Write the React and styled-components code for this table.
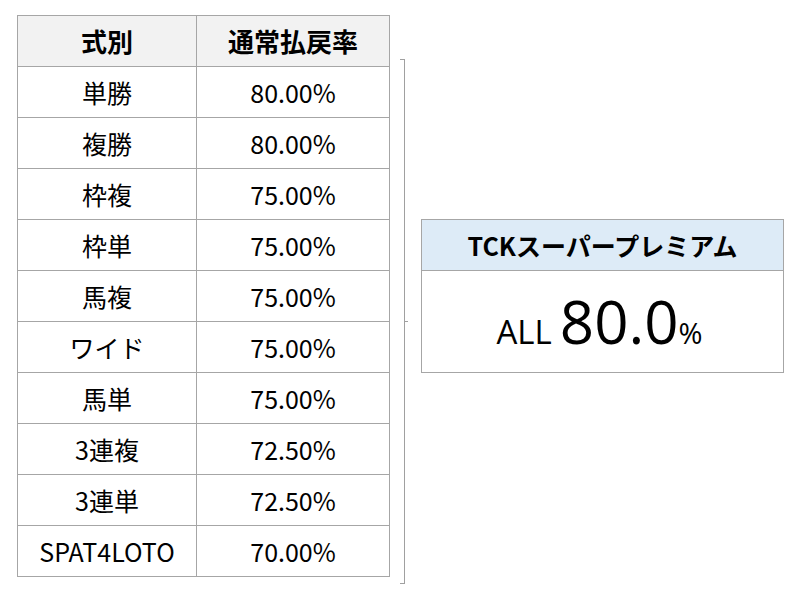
import React from "react";
import styled, { createGlobalStyle } from "styled-components";

const GlobalStyle = createGlobalStyle`
  html, body {
    margin: 0;
    padding: 0;
    background: #ffffff;
  }
`;

const Page = styled.div`
  display: flex;
  align-items: flex-start;
  padding: 15px 0 0 17px;
  color: #000;
  font-family: "Noto Sans CJK JP", "Open Sans", sans-serif;
`;

const RateTable = styled.table`
  border-collapse: collapse;
  width: 372px;
  table-layout: fixed;
`;

const HeadCell = styled.th`
  height: 50px;
  padding: 0;
  background: #f2f2f2;
  border: 1px solid #a6a6a6;
  font-size: 26px;
  font-weight: 700;
  line-height: 1;
  text-align: center;
`;

const Cell = styled.td`
  height: 50px;
  padding: 0;
  border: 1px solid #a6a6a6;
  font-size: 25px;
  font-weight: 400;
  line-height: 1;
  text-align: center;
`;

/* bracket that groups the whole table and points at the premium box */
const Bracket = styled.div`
  position: relative;
  flex: none;
  width: 4px;
  height: 523px;
  margin: 44px 0 0 10px;
  border: 1px solid #a0a0a0;
  border-left: none;

  &::after {
    content: "";
    position: absolute;
    top: 261px;
    left: 100%;
    width: 4px;
    height: 1px;
    background: #a0a0a0;
  }
`;

const PremiumBox = styled.div`
  flex: none;
  width: 361px;
  margin: 204px 0 0 16px;
  border: 1px solid #a6a6a6;
`;

const PremiumHead = styled.div`
  height: 50px;
  display: flex;
  align-items: center;
  justify-content: center;
  background: #ddebf7;
  border-bottom: 1px solid #a6a6a6;
  font-size: 25px;
  font-weight: 700;
`;

const PremiumBody = styled.div`
  height: 101px;
  display: flex;
  align-items: baseline;
  justify-content: center;
  padding-right: 6px;
  font-family: "Open Sans", sans-serif;
  line-height: 101px;
`;

const Part = styled.span`
  font-size: ${({ size }) => size}px;
  margin-right: ${({ gap }) => gap || 0}px;
`;

const rows = [
  ["単勝", "80.00%"],
  ["複勝", "80.00%"],
  ["枠複", "75.00%"],
  ["枠単", "75.00%"],
  ["馬複", "75.00%"],
  ["ワイド", "75.00%"],
  ["馬単", "75.00%"],
  ["3連複", "72.50%"],
  ["3連単", "72.50%"],
  ["SPAT4LOTO", "70.00%"],
];

const App = () => {
  return (
    <>
      <GlobalStyle />
      <Page>
        <RateTable>
          <colgroup>
            <col style={{ width: 179 }} />
            <col style={{ width: 193 }} />
          </colgroup>
          <thead>
            <tr>
              <HeadCell>式別</HeadCell>
              <HeadCell>通常払戻率</HeadCell>
            </tr>
          </thead>
          <tbody>
            {rows.map(([name, rate]) => (
              <tr key={name}>
                <Cell>{name}</Cell>
                <Cell>{rate}</Cell>
              </tr>
            ))}
          </tbody>
        </RateTable>

        <Bracket />

        <PremiumBox>
          <PremiumHead>TCKスーパープレミアム</PremiumHead>
          <PremiumBody>
            <Part size={33} gap={8}>ALL</Part>
            <Part size={60}>80.0</Part>
            <Part size={29}>%</Part>
          </PremiumBody>
        </PremiumBox>
      </Page>
    </>
  );
};

export default App;
